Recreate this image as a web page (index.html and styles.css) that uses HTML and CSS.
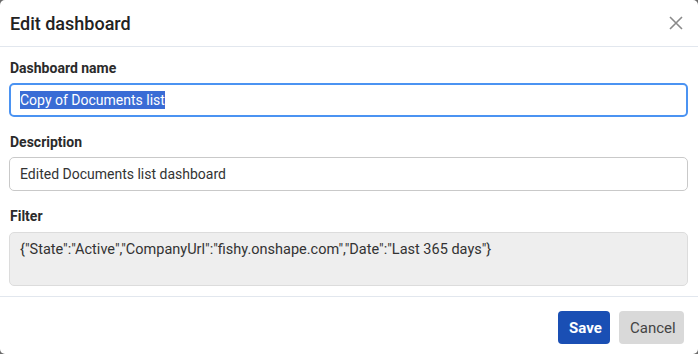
FILE: index.html
```html
<!DOCTYPE html>
<html>
<head>
  <link rel="stylesheet" href="styles.css">
</head>
<body>
  <div class="dialog">
    <div class="dialog-header">
      <h1 class="dialog-title">Edit dashboard</h1>
      <button class="close" aria-label="Close">
        <svg width="14" height="14" viewBox="0 0 14 14">
          <path d="M1 1 L13 13 M13 1 L1 13" stroke="#8a8a8a" stroke-width="1.6" fill="none"/>
        </svg>
      </button>
    </div>

    <div class="dialog-body">
      <label class="field-label">Dashboard name</label>
      <div class="text-input focused"><span class="selected">Copy of Documents list</span></div>

      <label class="field-label">Description</label>
      <div class="text-input">Edited Documents list dashboard</div>

      <label class="field-label">Filter</label>
      <div class="filter-box">{"State":"Active","CompanyUrl":"fishy.onshape.com","Date":"Last 365 days"}</div>
    </div>

    <div class="dialog-footer">
      <button class="btn btn-primary">Save</button>
      <button class="btn btn-secondary">Cancel</button>
    </div>
  </div>
</body>
</html>
```

FILE: styles.css
```css
html, body {
  margin: 0;
  padding: 0;
  height: 100%;
  background-color: #6b6b6b;
}

body {
  font-family: Roboto, "Liberation Sans", sans-serif;
  color: #2b2b2b;
}

.dialog {
  width: 698px;
  height: 354px;
  background-color: #fff;
  border-radius: 5px;
  display: flex;
  flex-direction: column;
  overflow: hidden;
}

.dialog-header {
  height: 46px;
  border-bottom: 1px solid #e2e7ee;
  display: flex;
  align-items: center;
  justify-content: space-between;
  padding: 0 15px 0 10px;
}

.dialog-title {
  margin: 0;
  font-size: 18px;
  font-weight: 500;
  color: #222;
}

.close {
  border: none;
  background: none;
  padding: 0;
  width: 14px;
  height: 14px;
  cursor: pointer;
}

.dialog-body {
  display: flex;
  flex-direction: column;
  padding: 11px 10px 0 9px;
  height: 250px;
  box-sizing: border-box;
  border-bottom: 1px solid #e2e7ee;
}

.field-label {
  font-size: 14px;
  font-weight: 700;
  line-height: 20px;
  padding-left: 1px;
  margin-bottom: 5px;
  color: #2b2b2b;
}

.text-input {
  height: 34px;
  box-sizing: border-box;
  border: 1px solid #c9c9c9;
  border-radius: 5px;
  padding: 0 10px;
  display: flex;
  align-items: center;
  font-size: 14px;
  color: #333;
  margin-bottom: 15px;
}

.text-input.focused {
  border: 2px solid #4b93f2;
  padding: 0 9px;
}

.selected {
  background-color: #3a6cd5;
  color: #fff;
  line-height: 18px;
}

.filter-box {
  height: 54px;
  margin-top: 1px;
  box-sizing: border-box;
  border: 1px solid #dcdcdc;
  border-radius: 5px;
  background-color: #eeeeee;
  padding: 8px 10px;
  font-size: 14.5px;
  color: #333;
}

.dialog-footer {
  display: flex;
  justify-content: flex-end;
  gap: 9px;
  padding: 14px 14px 0 0;
}

.btn {
  height: 33px;
  border: none;
  border-radius: 4px;
  font-family: Roboto, "Liberation Sans", sans-serif;
  font-size: 15px;
  padding: 0 11px;
  cursor: pointer;
}

.btn-primary {
  background-color: #1a4fb4;
  color: #fff;
  font-weight: 700;
  width: 52px;
}

.btn-secondary {
  background-color: #d9d9d9;
  color: #444;
  width: 65px;
}
```
